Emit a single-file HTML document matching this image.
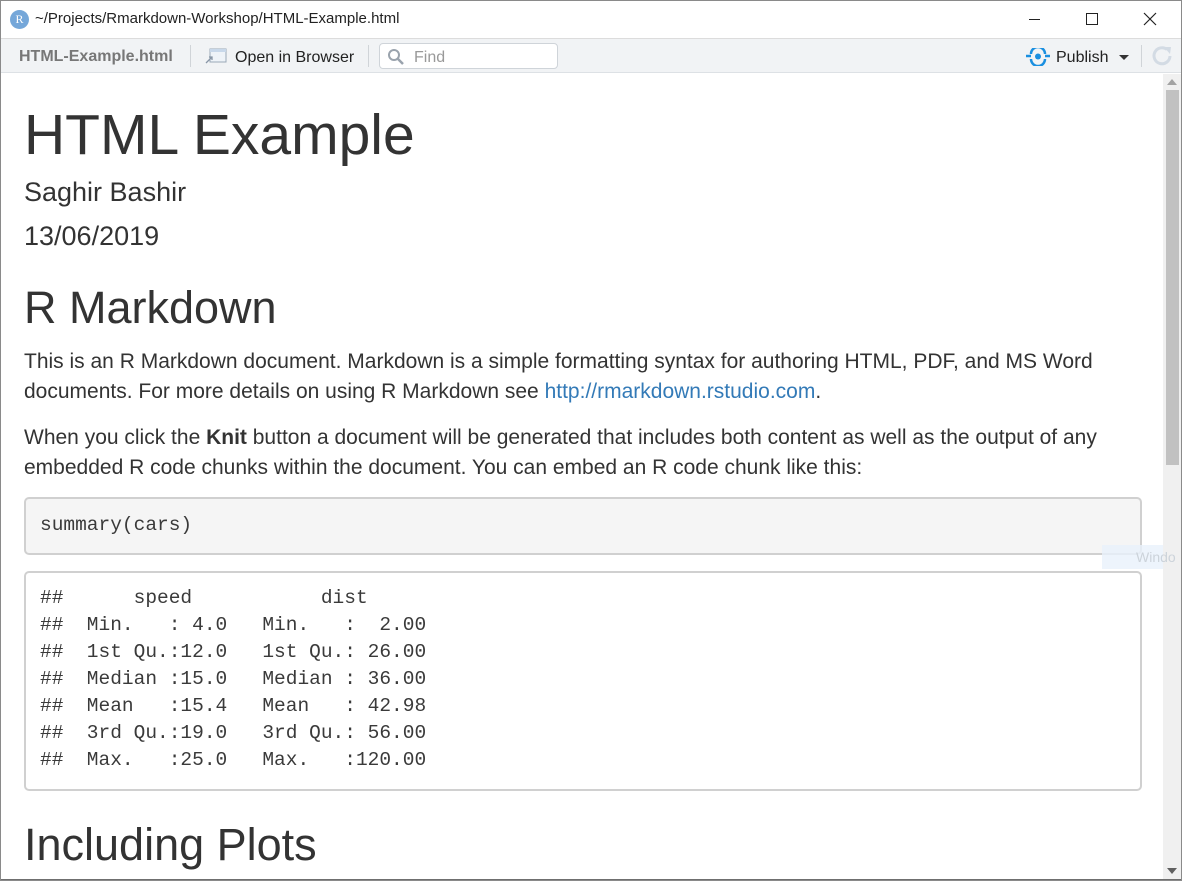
<!DOCTYPE html>
<html><head><meta charset="utf-8"><style>
*{margin:0;padding:0;box-sizing:border-box}
body{width:1182px;height:881px;overflow:hidden;background:#fff;font-family:"Liberation Sans",Arial,sans-serif;position:relative;color:#333}
.a{position:absolute;white-space:nowrap}
#frame{position:absolute;left:0;top:0;width:1182px;height:881px;border:1px solid #8a8a8a;pointer-events:none}
#title{position:absolute;left:0;top:0;width:1182px;height:39px;background:#fff;border-bottom:1px solid #dcdcdc}
#tb{position:absolute;left:1px;top:39px;width:1180px;height:34px;background:#f1f3f5;border-bottom:1px solid #dde1e5}
.sep{position:absolute;top:6px;width:1px;height:22px;background:#d0d4d8}
pre.a{font-family:"Liberation Mono","Courier New",monospace;font-size:19.5px;line-height:27px;color:#3a3a3a;white-space:pre}
.box{position:absolute;left:24px;width:1118px;border:2px solid #d0d0d0;border-radius:5px}
p{font-size:21px;line-height:30px}
</style></head><body>
<div id="title">
 <div class="a" style="left:10px;top:10px;width:19px;height:19px;border-radius:50%;background:#75a7d9;color:#fff;font:12px 'Liberation Serif',serif;text-align:center;line-height:19px">R</div>
 <div class="a" style="left:35px;top:10px;font-size:15px;color:#222">~/Projects/Rmarkdown-Workshop/HTML-Example.html</div>
 <div class="a" style="left:1029px;top:19px;width:11px;height:1px;background:#222"></div>
 <div class="a" style="left:1086px;top:13px;width:12px;height:12px;border:1px solid #222"></div>
 <svg class="a" style="left:1143px;top:12px" width="14" height="14"><path d="M1 1L13 13M13 1L1 13" stroke="#222" stroke-width="1.2"/></svg>
</div>
<div id="tb">
 <div class="a" style="left:18px;top:9px;font-size:16px;font-weight:bold;color:#777">HTML-Example.html</div>
 <div class="sep" style="left:189px"></div>
 <svg class="a" style="left:203px;top:8px" width="24" height="18"><rect x="6" y="2" width="16" height="13" fill="#eef3f8" stroke="#9aa8b8"/><rect x="6" y="2" width="16" height="3" fill="#c8d8ea"/><path d="M2 16L8 10M5 10H8V13" stroke="#8896a6" stroke-width="1.3" fill="none"/></svg>
 <div class="a" style="left:234px;top:10px;font-size:16px;color:#222">Open in Browser</div>
 <div class="sep" style="left:367px"></div>
 <div class="a" style="left:378px;top:4px;width:179px;height:26px;border:1px solid #cfd4d9;border-radius:4px;background:#fff"></div>
 <svg class="a" style="left:386px;top:9px" width="18" height="18"><circle cx="7" cy="7" r="5" fill="none" stroke="#9aa3ad" stroke-width="2"/><path d="M11 11L16 16" stroke="#9aa3ad" stroke-width="2.5"/></svg>
 <div class="a" style="left:413px;top:10px;font-size:16px;color:#999">Find</div>
 <svg class="a" style="left:1024px;top:9px" width="26" height="18"><path d="M1 8H6M20 8H25" stroke="#1a8fe0" stroke-width="2.5"/><path d="M6 6A7 7 0 0 1 20 6M20 11A7 7 0 0 1 6 11" stroke="#1a8fe0" stroke-width="2.5" fill="none"/><circle cx="13" cy="8.5" r="3" fill="#1a8fe0"/></svg>
 <div class="a" style="left:1055px;top:10px;font-size:16px;color:#222">Publish</div>
 <svg class="a" style="left:1118px;top:16px" width="10" height="6"><path d="M0 0H10L5 5Z" fill="#333"/></svg>
 <div class="sep" style="left:1140px"></div>
 <svg class="a" style="left:1150px;top:5px" width="24" height="24"><path d="M19 12A8 8 0 1 1 16 5.5" stroke="#d3dbe4" stroke-width="3" fill="none"/><path d="M13 3L20 3L19 10Z" fill="#d3dbe4"/></svg>
</div>
<div class="a" style="left:1163px;top:74px;width:18px;height:806px;background:#f0f0f0"></div>
<svg class="a" style="left:1167px;top:79px" width="10" height="6"><path d="M0 6H10L5 0Z" fill="#a3a3a3"/></svg>
<div class="a" style="left:1166px;top:90px;width:13px;height:375px;background:#c1c1c1"></div>
<svg class="a" style="left:1167px;top:868px" width="10" height="6"><path d="M0 0H10L5 6Z" fill="#606060"/></svg>

<div class="a" style="left:24px;top:107px;font-size:57px;line-height:57px">HTML Example</div>
<div class="a" style="left:24px;top:179px;font-size:27px;line-height:27px">Saghir Bashir</div>
<div class="a" style="left:24px;top:223px;font-size:27px;line-height:27px">13/06/2019</div>
<div class="a" style="left:24px;top:285px;font-size:45px;line-height:45px">R Markdown</div>
<p class="a" style="left:24px;top:347px">This is an R Markdown document. Markdown is a simple formatting syntax for authoring HTML, PDF, and MS Word<br>documents. For more details on using R Markdown see <span style="color:#337ab7">http://rmarkdown.rstudio.com</span>.</p>
<p class="a" style="left:24px;top:423px">When you click the <b>Knit</b> button a document will be generated that includes both content as well as the output of any<br>embedded R code chunks within the document. You can embed an R code chunk like this:</p>
<div class="box" style="top:497px;height:58px;background:#f5f5f5"></div>
<pre class="a" style="left:40px;top:512px">summary(cars)</pre>
<div class="box" style="top:571px;height:220px;background:#fff"></div>
<pre class="a" style="left:40px;top:585px">##      speed           dist
##  Min.   : 4.0   Min.   :  2.00
##  1st Qu.:12.0   1st Qu.: 26.00
##  Median :15.0   Median : 36.00
##  Mean   :15.4   Mean   : 42.98
##  3rd Qu.:19.0   3rd Qu.: 56.00
##  Max.   :25.0   Max.   :120.00</pre>
<div class="a" style="left:1102px;top:545px;width:61px;height:24px;background:#e8f1fb;opacity:.8"></div>
<div class="a" style="left:1136px;top:549px;font-size:14px;color:#ccd3da">Windo</div>
<div class="a" style="left:24px;top:822px;font-size:45px;line-height:45px">Including Plots</div>
<div class="a" style="left:0;top:879px;width:1182px;height:2px;background:#6f6f6f"></div>
<div id="frame"></div>
</body></html>
